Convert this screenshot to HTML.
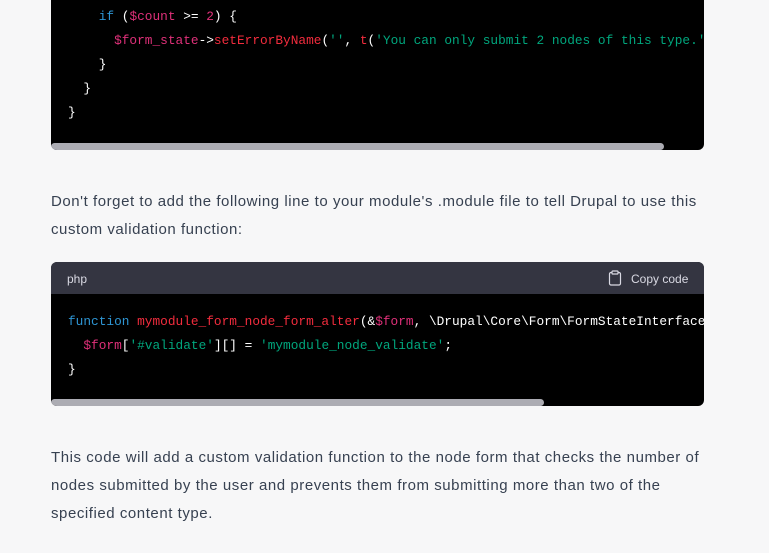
<!DOCTYPE html>
<html><head><style>
body{margin:0;background:#f7f7f8;width:769px;height:553px;overflow:hidden;position:relative;font-family:"Liberation Sans",sans-serif}
.blk{position:absolute;left:51px;width:653px;background:#000;border-radius:6px;overflow:hidden}
pre{margin:0;font-family:"Liberation Mono",monospace;font-size:12.8px;line-height:24px;color:#fff;white-space:pre;position:absolute;left:17px}
.sb{position:absolute;left:0;height:7px;background:#acacb3;border-radius:4px}
.k{color:#2e95d3}.v{color:#df3079}.f{color:#f22c3d}.s{color:#00a67d}
p{position:absolute;left:51px;width:700px;margin:0;font-size:15px;letter-spacing:0.55px;line-height:28px;color:#374151;white-space:nowrap}
.hd{height:32px;background:#343541;color:#d9d9e3;font-size:12px;position:relative}
</style></head><body>
<div class="blk" style="top:-10px;height:160px">
<pre style="top:15px">    <span class="k">if</span> (<span class="v">$count</span> &gt;= <span class="v">2</span>) {
      <span class="v">$form_state</span>-&gt;<span class="f">setErrorByName</span>(<span class="s">''</span>, <span class="f">t</span>(<span class="s">'You can only submit 2 nodes of this type.'</span>
    }
  }
}</pre>
<div class="sb" style="top:153px;width:613px"></div>
</div>
<p style="top:188px">Don't forget to add the following line to your module's .module file to tell Drupal to use this<br>custom validation function:</p>
<div class="blk" style="top:262px;height:144px">
<div class="hd"><span style="position:absolute;left:16px;top:10px">php</span>
<svg style="position:absolute;left:557px;top:8px" width="14" height="16" viewBox="0 0 14 16"><rect x="1.5" y="2.5" width="11" height="12.5" rx="1.5" fill="none" stroke="#d9d9e3" stroke-width="1.2"/><rect x="4" y="1" width="6" height="3" rx="0.8" fill="#343541" stroke="#d9d9e3" stroke-width="1.2"/></svg>
<span style="position:absolute;left:580px;top:10px">Copy code</span></div>
<pre style="top:48px"><span class="k">function</span> <span class="f">mymodule_form_node_form_alter</span>(&amp;<span class="v">$form</span>, \Drupal\Core\Form\FormStateInterface
  <span class="v">$form</span>[<span class="s">'#validate'</span>][] = <span class="s">'mymodule_node_validate'</span>;
}</pre>
<div class="sb" style="top:137px;width:493px"></div>
</div>
<p style="top:444px">This code will add a custom validation function to the node form that checks the number of<br>nodes submitted by the user and prevents them from submitting more than two of the<br>specified content type.</p>
</body></html>
